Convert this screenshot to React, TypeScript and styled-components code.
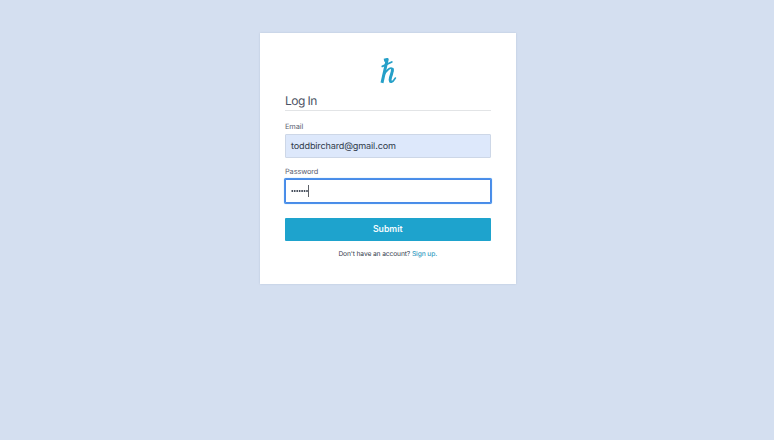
import React from "react";
import styled, { createGlobalStyle } from "styled-components";

const GlobalStyle = createGlobalStyle`
  *, *::before, *::after { box-sizing: border-box; }
  body {
    margin: 0;
    background: #d4dff0;
    font-family: Inter, "Liberation Sans", sans-serif;
    color: #4c5364;
    text-rendering: geometricPrecision;
  }
`;

const Page = styled.main`
  display: flex;
  justify-content: center;
  align-items: flex-start;
  height: 440px;
  padding: 33px 0 0 2px;
`;

const Card = styled.form`
  display: flex;
  flex-direction: column;
  width: 256px;
  height: 251px;
  padding: 25px 25.5px 0 25px;
  background: #fff;
  box-shadow: 0 0 2px #b9c6da;
`;

const Logo = styled.svg`
  display: block;
  align-self: center;
  width: 18px;
  height: 26px;
`;

const Title = styled.h1`
  flex: none;
  height: 27px;
  margin: 0 0 11px;
  padding-top: 8px;
  border-bottom: 1px solid #e2e4e6;
  font-size: 12px;
  font-weight: 400;
  line-height: 17px;
  letter-spacing: -0.55px;
`;

const Field = styled.div<{ $gap: number }>`
  display: flex;
  flex-direction: column;
  margin-bottom: ${(p) => p.$gap}px;
`;

const Label = styled.label`
  height: 12px;
  font-size: 7.4px;
  line-height: 9px;
  letter-spacing: -0.12px;
  color: #596071;
`;

const Control = styled.div<{ $focused?: boolean }>`
  display: flex;
  align-items: center;
  height: 24px;
  padding: 0 5px;
  border: 1px solid ${(p) => (p.$focused ? "#4a8ae6" : "#cdd7e7")};
  border-radius: 1px;
  background: ${(p) => (p.$focused ? "#fff" : "#dde8fb")};
  box-shadow: ${(p) => (p.$focused ? "0 0 0 1px #4b91eb, 0 0 1px 1px #72b4f4" : "none")};
`;

const Value = styled.span`
  padding-top: 2px;
  font-family: Inter, sans-serif;
  font-size: 9.1px;
  line-height: 12px;
  letter-spacing: -0.15px;
  color: #303b4b;
`;

const Dots = styled.svg`
  display: block;
  width: 17px;
  height: 4px;
  fill: #333c4b;
`;

const Caret = styled.i`
  width: 1px;
  height: 12px;
  background: #5d6066;
`;

const Submit = styled.button`
  flex: none;
  height: 23px;
  padding: 0;
  border: 0;
  border-radius: 1px;
  background: #1ea3cd;
  color: #f4fbfe;
  font: 600 8.7px/23px Inter, sans-serif;
`;

const Signup = styled.p`
  margin: 7px 0 0;
  text-align: center;
  white-space: nowrap;
  font-size: 6.7px;
  line-height: 12px;
  letter-spacing: -0.12px;
  color: #343c4d;
`;

const Link = styled.a`
  color: #3b9fc4;
  font-weight: 500;
`;

export default function App() {
  return (
    <>
      <GlobalStyle />
      <Page>
        <Card>
          <Logo viewBox="0 0 18 26" fill="none" stroke="#26a0c8" strokeLinecap="round" strokeLinejoin="round">
            <path d="M5 2.2 8.2 1.5 3 24.8" strokeWidth="3" strokeLinecap="butt" />
            <path d="M3.3 8.4 12.8 4" strokeWidth="1.8" />
            <path d="M4.5 17.5C7.3 12.5 10.8 9.7 12.8 10.3C14.8 11 12.9 15.3 11.6 19C10.5 22.5 10.9 24.4 12.4 24.2C14 23.8 15.2 22 16.4 20" strokeWidth="1.6" />
            <path d="M13.4 11.4C13.9 13.4 12.2 16.7 11.5 19.5C11 21.2 10.9 22.5 11.5 23.2" strokeWidth="3" />
          </Logo>
          <Title>Log In</Title>
          <Field $gap={9}>
            <Label>Email</Label>
            <Control><Value>toddbirchard@gmail.com</Value></Control>
          </Field>
          <Field $gap={15}>
            <Label>Password</Label>
            <Control $focused>
              <Dots viewBox="0 0 17 4">
                {Array.from({ length: 7 }, (_, i) => (
                  <circle key={i} cx={1.3 + i * 2.45} cy={2} r={0.95} />
                ))}
              </Dots>
              <Caret />
            </Control>
          </Field>
          <Submit type="button">Submit</Submit>
          <Signup>Don't have an account? <Link>Sign up.</Link></Signup>
        </Card>
      </Page>
    </>
  );
}
